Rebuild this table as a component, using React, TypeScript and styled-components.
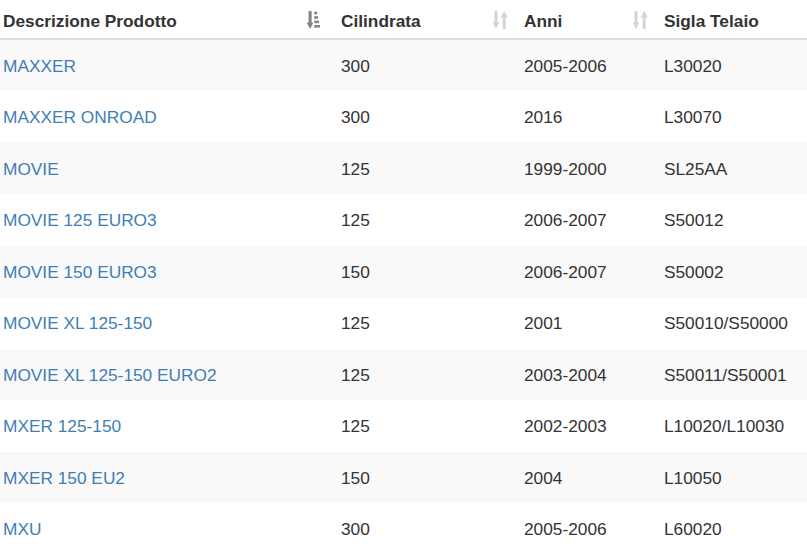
import styled, { createGlobalStyle } from "styled-components";

const GlobalStyle = createGlobalStyle`
  html, body {
    margin: 0;
    padding: 0;
    background: #fff;
  }
  body {
    font-family: "Liberation Sans", Arial, Helvetica, sans-serif;
    color: #333;
  }
`;

type Moto = {
  name: string;
  cc: string;
  years: string;
  frame: string;
};

const ROWS: Moto[] = [
  { name: "MAXXER", cc: "300", years: "2005-2006", frame: "L30020" },
  { name: "MAXXER ONROAD", cc: "300", years: "2016", frame: "L30070" },
  { name: "MOVIE", cc: "125", years: "1999-2000", frame: "SL25AA" },
  { name: "MOVIE 125 EURO3", cc: "125", years: "2006-2007", frame: "S50012" },
  { name: "MOVIE 150 EURO3", cc: "150", years: "2006-2007", frame: "S50002" },
  { name: "MOVIE XL 125-150", cc: "125", years: "2001", frame: "S50010/S50000" },
  { name: "MOVIE XL 125-150 EURO2", cc: "125", years: "2003-2004", frame: "S50011/S50001" },
  { name: "MXER 125-150", cc: "125", years: "2002-2003", frame: "L10020/L10030" },
  { name: "MXER 150 EU2", cc: "150", years: "2004", frame: "L10050" },
  { name: "MXU", cc: "300", years: "2005-2006", frame: "L60020" },
];

const Table = styled.table`
  width: 100%;
  border-collapse: collapse;
  border-spacing: 0;
  table-layout: fixed;
  font-size: 17.3px;
  line-height: 24.7px;
`;

const Col = styled.col<{ $w?: number }>`
  width: ${(p) => (p.$w ? `${p.$w}px` : "auto")};
`;

const Th = styled.th`
  text-align: left;
  font-weight: 700;
  padding: 8.9px 8.6px 4.4px;
  border-bottom: 2px solid #ddd;
  vertical-align: bottom;

  &:first-child {
    padding-left: 3px;
  }
`;

const HeadInner = styled.div`
  display: flex;
  align-items: center;
  justify-content: space-between;
`;

const SortIcon = styled.svg<{ $active?: boolean }>`
  flex: none;
  width: ${(p) => (p.$active ? 13 : 16)}px;
  height: 18px;
  margin: 0 ${(p) => (p.$active ? 4 : -1)}px 3px 0;
  fill: #333;
  opacity: ${(p) => (p.$active ? 0.6 : 0.2)};
`;

const Row = styled.tr`
  &:nth-child(odd) {
    background: #f9f9f9;
  }
`;

const Td = styled.td`
  padding: 13.9px 8.6px 12.9px;
  vertical-align: top;
  white-space: nowrap;

  &:first-child {
    padding-left: 3px;
  }
`;

const Link = styled.a`
  color: #3f7eb3;
  text-decoration: none;
`;

const SortAsc = () => (
  <SortIcon $active viewBox="0 0 13 18">
    <rect x="1.6" y="0" width="3" height="12" />
    <polygon points="-0.2,11.5 6.4,11.5 3.1,18" />
    <rect x="7.2" y="0.8" width="3" height="2.6" />
    <rect x="7.2" y="5.2" width="3.9" height="2.6" />
    <rect x="7.2" y="9.6" width="4.8" height="2.6" />
    <rect x="7.2" y="14" width="5.8" height="2.6" />
  </SortIcon>
);

const SortBoth = () => (
  <SortIcon viewBox="0 0 16 18">
    <rect x="2.5" y="0" width="3" height="12" />
    <polygon points="0.6,11.5 7.4,11.5 4,18" />
    <rect x="10.7" y="6" width="3" height="12" />
    <polygon points="8.6,6.5 15.8,6.5 12.2,0" />
  </SortIcon>
);

const Header = ({ label, active }: { label: string; active?: boolean }) => (
  <Th>
    <HeadInner>
      <span>{label}</span>
      {label !== "Sigla Telaio" && (active ? <SortAsc /> : <SortBoth />)}
    </HeadInner>
  </Th>
);

const App = () => {
  return (
    <>
      <GlobalStyle />
      <Table>
        <colgroup>
          <Col $w={332.4} />
          <Col $w={183} />
          <Col $w={140} />
          <Col />
        </colgroup>
        <thead>
          <tr>
            <Header label="Descrizione Prodotto" active />
            <Header label="Cilindrata" />
            <Header label="Anni" />
            <Header label="Sigla Telaio" />
          </tr>
        </thead>
        <tbody>
          {ROWS.map((r) => (
            <Row key={r.name}>
              <Td>
                <Link href="#">{r.name}</Link>
              </Td>
              <Td>{r.cc}</Td>
              <Td>{r.years}</Td>
              <Td>{r.frame}</Td>
            </Row>
          ))}
        </tbody>
      </Table>
    </>
  );
};

export default App;
